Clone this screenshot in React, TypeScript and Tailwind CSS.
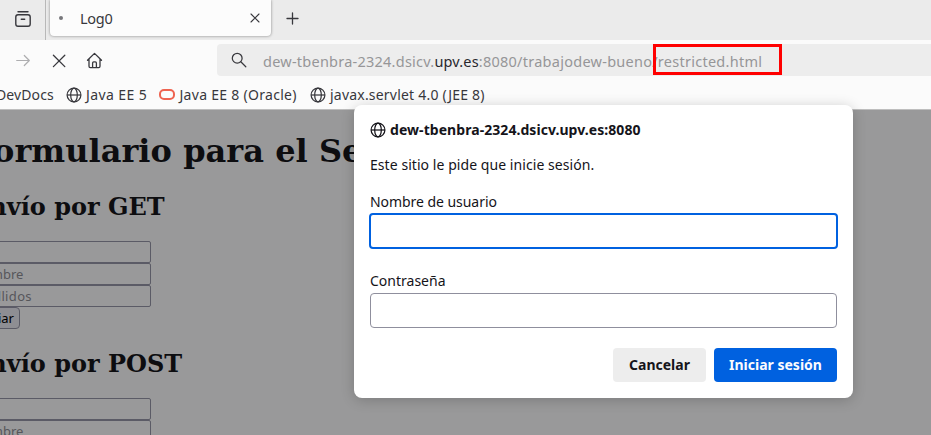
import type { ReactNode } from "react";

const Globe = ({ className = "" }: { className?: string }) => (
  <svg className={`shrink-0 ${className}`} width="16" height="16" viewBox="0 0 16 16" fill="none" stroke="currentColor" strokeWidth="1.25">
    <circle cx="8" cy="8" r="6.9" />
    <ellipse cx="8" cy="8" rx="3.3" ry="6.9" />
    <path d="M1.1 8h13.8" />
  </svg>
);

const Field = ({ children }: { children?: ReactNode }) => (
  <div className="flex h-[22px] w-[182px] items-center rounded-[2px] border border-[#5b5b66] pl-[3px] font-['Noto_Sans',sans-serif] text-[13px] leading-none text-[#56565a]">
    {children}
  </div>
);

const Heading = ({ children }: { children: ReactNode }) => (
  <h2 className="ml-0.5 h-7 text-2xl leading-7 font-bold whitespace-nowrap">{children}</h2>
);

function Chrome() {
  return (
    <header className="h-[110px] border-b border-[#bebebe] bg-[#fbfbfb] text-[#38383d]">
      <div className="flex h-10 bg-[#ebebeb]">
        <div className="flex w-[46px] items-center justify-end border-r border-[#b8b8b8] pr-[13px]">
          <svg className="-mt-[3px]" width="18" height="18" viewBox="0 0 18 18" fill="none" stroke="currentColor" strokeWidth="1.4" strokeLinecap="round">
            <path d="M4 1.8h10" />
            <rect x="1.8" y="4.7" width="14.4" height="11.5" rx="2.2" />
            <path d="M7.3 9.2h3.4" />
          </svg>
        </div>
        <div className="ml-1 flex h-9 w-[221px] items-center rounded-b-[4px] bg-[#fcfcfc] pr-[10px] pl-[9px] shadow-[0_0_3px_rgba(0,0,0,0.45)]">
          <span className="h-1 w-1 rounded-full bg-[#77777b]" />
          <span className="ml-[17px] flex-1 text-[14.5px] leading-5 tracking-[-0.3px]">Log0</span>
          <svg width="12" height="12" viewBox="0 0 12 12" fill="none" stroke="currentColor" strokeWidth="1.1" strokeLinecap="round">
            <path d="m2 2 8 8M10 2 2 10" />
          </svg>
        </div>
        <svg className="mt-3 ml-[15px]" width="13" height="13" viewBox="0 0 13 13" stroke="currentColor" strokeWidth="1.3" strokeLinecap="round">
          <path d="M6.5 1v11M1 6.5h11" />
        </svg>
      </div>
      <div className="flex h-10 items-center pt-0.5 pl-[15px]">
        <svg className="-mt-0.5 text-[#aeaeb0]" width="16" height="16" viewBox="0 0 16 16" fill="none" stroke="currentColor" strokeWidth="1.2" strokeLinecap="round" strokeLinejoin="round">
          <path d="M1.7 8.5h12.6M9.3 3.5l5 5-5 5" />
        </svg>
        <svg className="-mt-0.5 ml-5" width="16" height="16" viewBox="0 0 16 16" fill="none" stroke="currentColor" strokeWidth="1.3" strokeLinecap="round">
          <path d="m2.4 3.2 11.4 11.4M13.8 3.2 2.4 14.6" />
        </svg>
        <svg className="-mt-px ml-[19px]" width="17" height="17" viewBox="0 0 17 17" fill="none" stroke="currentColor" strokeWidth="1.3" strokeLinecap="round" strokeLinejoin="round">
          <path d="M1.5 8.3 8.5 1.4l7 6.9M3 7v7.3c0 .8.5 1.3 1.3 1.3h8.4c.8 0 1.3-.5 1.3-1.3V7M6.6 15.5V11c0-.7.4-1.1 1.1-1.1h1.6c.7 0 1.1.4 1.1 1.1v4.5" />
        </svg>
        <div className="-mt-0.5 ml-[114px] flex h-8 flex-1 items-center rounded-l-[4px] bg-[#ededed] pt-0.5 pl-[14px]">
          <svg className="-mt-0.5" width="16" height="16" viewBox="0 0 16 16" fill="none" stroke="currentColor" strokeWidth="1.25" strokeLinecap="round">
            <circle cx="6.2" cy="6.2" r="4.9" />
            <path d="m9.8 9.8 5 5" />
          </svg>
          <div className="ml-4 flex text-[14.5px] leading-5 tracking-[0.24px] whitespace-nowrap text-[#969698]">
            <span>dew-tbenbra-2324.dsicv.</span>
            <span className="tracking-[0.16px] text-[#28282d]">upv.es</span>
            <span className="tracking-[0.26px]">:8080/trabajodew-bueno/restricted.html</span>
          </div>
        </div>
      </div>
      <div className="flex h-[29px] items-center text-[14px] leading-5 whitespace-nowrap">
        <span className="-ml-1 w-[58px] tracking-[0.1px]">DevDocs</span>
        <Globe className="ml-3" />
        <span className="ml-1 w-[61px] tracking-[0.4px]">Java EE 5</span>
        <span className="ml-3 h-[11px] w-4 rounded-[5px] border-2 border-[#ee6350]" />
        <span className="ml-[4.5px] w-[118px] tracking-[0.29px]">Java EE 8 (Oracle)</span>
        <Globe className="ml-[12.5px]" />
        <span className="ml-1 tracking-[0.21px]">javax.servlet 4.0 (JEE 8)</span>
      </div>
    </header>
  );
}

export default function App() {
  return (
    <div className="relative h-[435px] w-[931px] overflow-hidden bg-[#99999a] font-['Noto_Sans',sans-serif]">
      <Chrome />
      <main className="-ml-[31px] pt-[21px] font-['DejaVu_Serif',serif] text-[#0d0d10]">
        <h1 className="ml-[3px] h-10 text-[32px] leading-10 font-bold tracking-[0.04px] whitespace-nowrap">Formulario para el Servlet</h1>
        <div className="mt-[22px]">
          <Heading>Envío por GET</Heading>
          <div className="mt-5">
            <Field />
            <Field>Nombre</Field>
            <Field><span className="tracking-[0.35px]">Apellidos</span></Field>
            <div className="flex h-[22px] w-[51px] items-center justify-end rounded-[4px] border border-[#5b5b66] bg-[#8e8e93] pr-[5px] font-['Noto_Sans',sans-serif] text-[13px] leading-none text-black">Enviar</div>
          </div>
        </div>
        <div className="mt-[21px]">
          <Heading>Envío por POST</Heading>
          <div className="mt-5">
            <Field />
            <Field>Nombre</Field>
          </div>
        </div>
      </main>
      <div className="absolute top-[44px] left-[653px] h-[31px] w-[129px] border-3 border-[#ff0000]" />
      <div className="absolute top-[105px] left-[354px] h-[293px] w-[499px] rounded-lg bg-white px-4 pt-4 text-[14px] leading-[18px] text-[#15141a] shadow-[0_2px_14px_rgba(0,0,0,0.2)]">
        <div className="flex items-center font-bold">
          <Globe />
          <span className="ml-1 tracking-[0.06px]">dew-tbenbra-2324.dsicv.upv.es:8080</span>
        </div>
        <p className="mt-[17px] tracking-[0.06px]">Este sitio le pide que inicie sesión.</p>
        <p className="mt-[19px] tracking-[-0.05px]">Nombre de usuario</p>
        <div className="mt-[2px] -ml-px h-9 w-[469px] rounded-[4px] border-2 border-[#0061e0]" />
        <p className="mt-[23px]">Contraseña</p>
        <div className="mt-[3px] h-[35px] w-[467px] rounded-[4px] border border-[#8f8f9d]" />
        <div className="mt-5 flex justify-end gap-2 font-bold">
          <button className="h-[34px] w-[93px] rounded-[4px] bg-[#ededed]">Cancelar</button>
          <button className="h-[34px] w-[123px] rounded-[4px] bg-[#0061e0] text-[#fbfbfe]">Iniciar sesión</button>
        </div>
      </div>
    </div>
  );
}
